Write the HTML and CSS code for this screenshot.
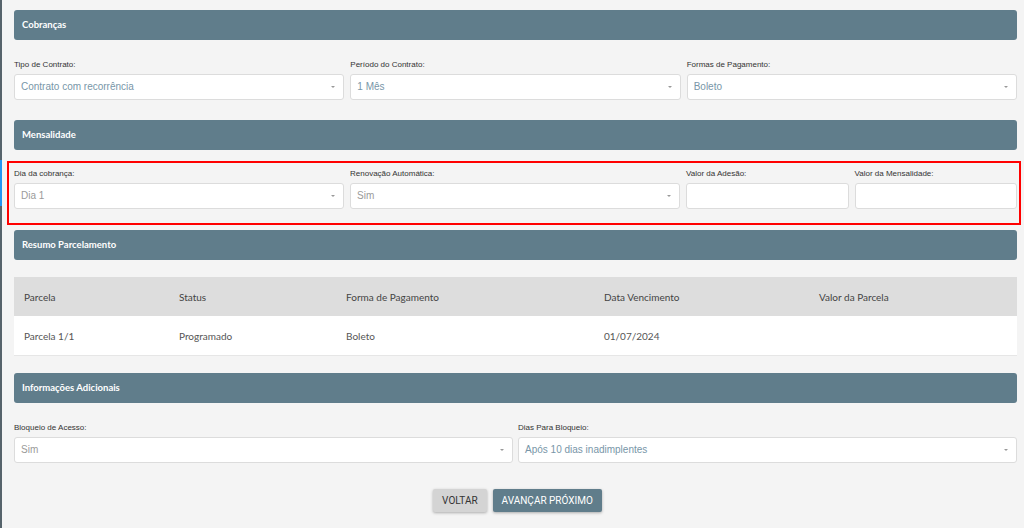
FILE: index.html
```html
<!DOCTYPE html>
<html lang="pt-BR">

<head>
    <meta charset="UTF-8">
    <title>Cobranças</title>
    <link rel="stylesheet" href="styles.css">
</head>

<body>
    <div class="edge-mark"></div>
    <div class="page">

        <div class="section-title">Cobranças</div>
        <div class="row cols-3 first-row">
            <div class="field">
                <label>Tipo de Contrato:</label>
                <div class="select blue">Contrato com recorrência</div>
            </div>
            <div class="field">
                <label>Período do Contrato:</label>
                <div class="select blue">1 Mês</div>
            </div>
            <div class="field">
                <label>Formas de Pagamento:</label>
                <div class="select blue">Boleto</div>
            </div>
        </div>

        <div class="section-title">Mensalidade</div>
        <div class="highlight">
            <div class="row cols-4">
                <div class="field">
                    <label>Dia da cobrança:</label>
                    <div class="select grey">Dia 1</div>
                </div>
                <div class="field">
                    <label>Renovação Automática:</label>
                    <div class="select grey">Sim</div>
                </div>
                <div class="field">
                    <label>Valor da Adesão:</label>
                    <div class="input"></div>
                </div>
                <div class="field">
                    <label>Valor da Mensalidade:</label>
                    <div class="input"></div>
                </div>
            </div>
        </div>

        <div class="section-title">Resumo Parcelamento</div>
        <table class="parcelas">
            <tr class="head">
                <td class="c1">Parcela</td>
                <td class="c2">Status</td>
                <td class="c3">Forma de Pagamento</td>
                <td class="c4">Data Vencimento</td>
                <td>Valor da Parcela</td>
            </tr>
            <tr>
                <td>Parcela 1/1</td>
                <td>Programado</td>
                <td>Boleto</td>
                <td>01/07/2024</td>
                <td></td>
            </tr>
        </table>

        <div class="section-title">Informações Adicionais</div>
        <div class="row cols-2 first-row">
            <div class="field">
                <label>Bloqueio de Acesso:</label>
                <div class="select grey">Sim</div>
            </div>
            <div class="field">
                <label>Dias Para Bloqueio:</label>
                <div class="select blue">Após 10 dias inadimplentes</div>
            </div>
        </div>

        <div class="actions">
            <button class="btn btn-back">VOLTAR</button>
            <button class="btn btn-next">AVANÇAR PRÓXIMO</button>
        </div>

    </div>
</body>

</html>
```

FILE: styles.css
```css
html,
body {
    margin: 0;
    padding: 0;
}

body {
    background-color: #f4f4f4;
    border-left: 2px solid #56636b;
    min-height: 528px;
    box-sizing: border-box;
    font-family: "Liberation Sans", Arial, sans-serif;
}

.edge-mark {
    position: absolute;
    left: 0;
    top: 160px;
    width: 2px;
    height: 46px;
    background-color: #2196f3;
}

.page {
    padding: 10px 7px 0 12px;
}

.section-title {
    height: 30px;
    line-height: 30px;
    background-color: #607d8b;
    border-radius: 3px;
    color: #ffffff;
    font-family: "Lato", sans-serif;
    font-weight: 700;
    font-size: 9.5px;
    padding-left: 8px;
}

.row {
    display: grid;
    column-gap: 6px;
}

.cols-3 {
    grid-template-columns: 1fr 1fr 1fr;
}

.cols-4 {
    grid-template-columns: 330px 330px 1fr 1fr;
    column-gap: 6px;
}

.cols-2 {
    grid-template-columns: 1fr 1fr;
    column-gap: 5px;
}

.first-row {
    margin-top: 19px;
    margin-bottom: 20px;
}

.field label {
    display: block;
    font-size: 8px;
    color: #333333;
    line-height: 12px;
    margin-bottom: 3px;
}

.select,
.input {
    position: relative;
    height: 24px;
    line-height: 24px;
    background-color: #ffffff;
    border: 1px solid #dcdcdc;
    border-radius: 3px;
    padding-left: 6px;
    font-size: 10px;
}

.select::after {
    content: "";
    position: absolute;
    right: 8px;
    top: 11px;
    border-left: 2px solid transparent;
    border-right: 2px solid transparent;
    border-top: 2px solid #999999;
}

.blue {
    color: #7896a8;
}

.grey {
    color: #9a9a9a;
}

.highlight {
    border: 2px solid #ff0000;
    margin: 11px -4px 5px -7px;
    padding: 5px 2px 14px 5px;
}

.parcelas {
    width: 100%;
    border-collapse: collapse;
    margin: 17px 0 17px 0;
    font-family: "Lato", sans-serif;
    font-size: 10px;
    color: #555555;
}

.parcelas td {
    height: 39px;
    padding: 0 0 0 10px;
    background-color: #ffffff;
    border-bottom: 1px solid #e6e6e6;
}

.parcelas .head td {
    background-color: #dddddd;
    color: #444444;
    border-bottom: none;
}

.c1 {
    width: 145px;
}

.c2 {
    width: 157px;
}

.c3 {
    width: 248px;
}

.c4 {
    width: 205px;
}

.actions {
    display: flex;
    justify-content: center;
    gap: 6px;
    margin-top: 26px;
    padding-left: 4px;
}

.btn {
    height: 23px;
    border: none;
    border-radius: 2px;
    font-family: "Roboto", sans-serif;
    font-weight: 400;
    font-size: 10px;
    padding: 0 9px;
    box-shadow: 0 1px 3px rgba(0, 0, 0, 0.3);
    cursor: pointer;
}

.btn-back {
    background-color: #d4d4d4;
    color: #333333;
}

.btn-next {
    background-color: #607d8b;
    color: #ffffff;
}
```
